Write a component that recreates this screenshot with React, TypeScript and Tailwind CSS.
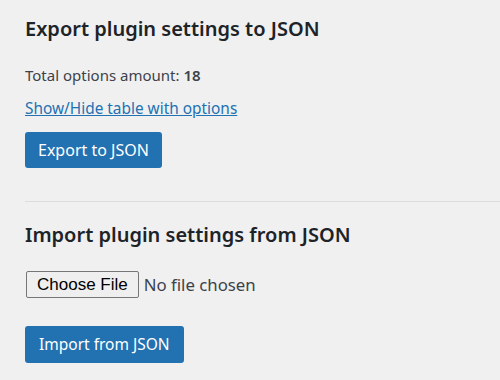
const font = { fontFamily: '"Noto Sans", "Open Sans", sans-serif' }

export default function App() {
  return (
    <main className="min-h-screen bg-[#f0f0f1] pl-[25px] pt-[13px] text-[#3c434a]" style={font}>
      {/* Export section */}
      <section>
        <h2 className="text-[20px] leading-[32px] font-semibold text-[#1d2327]">
          Export plugin settings to JSON
        </h2>
        <p className="mt-[18px] text-[15px] leading-[24px]">
          Total options amount: <strong className="font-semibold">18</strong>
        </p>
        <p className="mt-[10px] text-[15.4px] leading-[24px]">
          <a href="#" className="text-[#2271b1] underline">
            Show/Hide table with options
          </a>
        </p>
        <button className="mt-[11px] h-[36px] rounded-[3px] bg-[#2271b1] px-[13px] text-[16px] text-white">
          Export to JSON
        </button>
      </section>

      <hr className="mt-[33px] border-t border-[#dcdcde]" />

      {/* Import section */}
      <section className="pt-[17px]">
        <h2 className="text-[20px] leading-[32px] font-semibold text-[#1d2327]">
          Import plugin settings from JSON
        </h2>
        <div className="mt-[20px] flex items-center">
          <span
            className="ml-[1px] flex h-[27px] items-center rounded-[2px] border border-[#767676] bg-[#efefef] px-[10px] text-[17px] text-black"
            style={{ fontFamily: '"Liberation Sans", Arial, sans-serif' }}
          >
            Choose File
          </span>
          <span className="ml-[5px] text-[16.8px] text-[#3c434a]">No file chosen</span>
        </div>
        <button className="mt-[28px] h-[37px] rounded-[3px] bg-[#2271b1] px-[14px] text-[15.5px] text-white">
          Import from JSON
        </button>
      </section>
    </main>
  )
}
